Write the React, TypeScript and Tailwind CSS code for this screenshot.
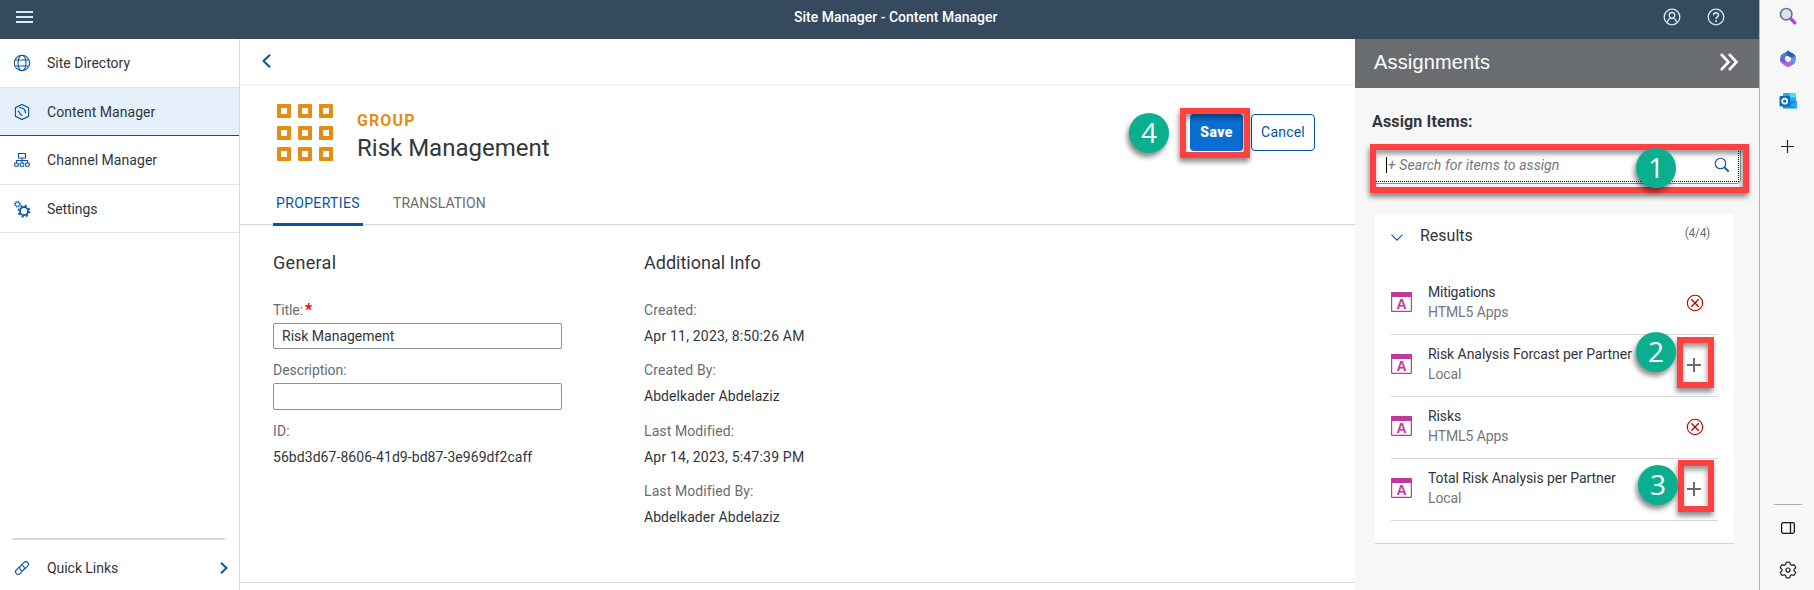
import React from "react";

type IconProps = { className?: string };

const GlobeIcon = ({ className }: IconProps) => (
  <svg viewBox="0 0 18 18" className={className} fill="none" stroke="currentColor" strokeWidth="1.1">
    <circle cx="9" cy="9" r="7.7" />
    <ellipse cx="9" cy="9" rx="4" ry="7.7" />
    <path d="M2.4 6h13.2M2.4 12h13.2" />
  </svg>
);

const ContentIcon = ({ className }: IconProps) => (
  <svg viewBox="0 0 18 18" className={className} fill="none" stroke="currentColor" strokeWidth="1.1">
    <path d="M9 1.4l6.600 3.300v8.600L9 16.600l-6.600-3.300V4.700z" />
    <path d="M6.500 4.700c3 .1 6 1.300 6 5.500M4.800 8.200c1.500.2 1.500.9 1.800 1.800.4 1.300 1.200 1.900 2.800 2.300" strokeWidth="1.200" />
  </svg>
);

const ChannelIcon = ({ className }: IconProps) => (
  <svg viewBox="0 0 18 18" className={className} fill="none" stroke="currentColor" strokeWidth="1.1">
    <path d="M5.500 2.500h7v4.500h-7zM9 7v5M3.500 12V9.500h11V12" />
    <rect x="1.700" y="12" width="3.600" height="3.200" rx="0.800" />
    <rect x="7.200" y="12" width="3.600" height="3.200" rx="0.800" />
    <rect x="12.700" y="12" width="3.600" height="3.200" rx="0.800" />
  </svg>
);

const GearsIcon = ({ className }: IconProps) => (
  <svg viewBox="0 0 18 18" className={className} fill="none" stroke="currentColor">
    <circle cx="11" cy="11.200" r="4" strokeWidth="1.800" />
    <circle cx="11" cy="11.200" r="5.600" strokeWidth="1.600" strokeDasharray="2.200 2.198" />
    <circle cx="4.400" cy="4.200" r="2.100" strokeWidth="1" />
    <circle cx="4.400" cy="4.200" r="3.100" strokeWidth="1" strokeDasharray="1.200 1.235" />
  </svg>
);

const LinkIcon = ({ className }: IconProps) => (
  <svg viewBox="0 0 18 18" className={className} fill="none" stroke="currentColor" strokeWidth="1.100" strokeLinecap="round">
    <g transform="rotate(-45 9 9)">
      <path d="M10 11.700h4.300a2.600 2.600 0 0 0 0-5.200H9.200a2.600 2.600 0 0 0-1.700 4.500" />
      <path d="M8 6.300H3.700a2.600 2.600 0 0 0 0 5.200h5.100A2.600 2.600 0 0 0 10.500 7" />
    </g>
  </svg>
);

const AppIcon = ({ className }: IconProps) => (
  <svg viewBox="0 0 21 20" className={className}>
    <rect x="0.600" y="0.600" width="19.800" height="18.800" rx="0.600" fill="#fff" stroke="#c0399f" strokeWidth="1.200" />
    <rect width="21" height="5" rx="0.800" fill="#c0399f" />
    <text x="10.500" y="17" textAnchor="middle" fontFamily="Liberation Sans, sans-serif" fontWeight="700" fontSize="14" fill="#c0399f">A</text>
  </svg>
);

const RemoveIcon = ({ className }: IconProps) => (
  <svg viewBox="0 0 18 18" className={className} fill="none" stroke="#bb0000" strokeWidth="1.1">
    <circle cx="9" cy="9" r="7.700" />
    <path d="M5.300 5.300l7.400 7.400M12.700 5.300l-7.400 7.400" strokeWidth="1.300" />
  </svg>
);

const AddIcon = ({ className }: IconProps) => (
  <svg viewBox="0 0 14 14" className={className} fill="none" stroke="#6a6d70" strokeWidth="2">
    <path d="M7 0v14M0 7h14" />
  </svg>
);

const SearchIcon = ({ className }: IconProps) => (
  <svg viewBox="0 0 16 16" className={className} fill="none" stroke="#0854a0">
    <circle cx="6.500" cy="6.500" r="5.300" strokeWidth="1.100" />
    <path d="M10.400 10.400l4.300 4.100" strokeWidth="1.900" />
  </svg>
);

const Badge = ({ n, pos }: { n: number; pos: string }) => (
  <div
    className={`absolute ${pos} flex size-10 items-center justify-center rounded-full bg-[#0aaf8f] pb-0.5 font-['Open_Sans',sans-serif] text-[28px] font-medium leading-none text-white shadow-[-2px_4px_5px_rgba(0,0,0,0.45)]`}
  >
    {n}
  </div>
);

const Frame = ({ pos }: { pos: string }) => (
  <div
    className={`absolute ${pos} border-[6px] border-[#ff4141] shadow-[-1px_4px_5px_rgba(0,0,0,0.45),inset_-1px_4px_5px_rgba(0,0,0,0.4)]`}
  />
);

const navItems = [
  { label: "Site Directory", Icon: GlobeIcon, cls: "h-[49px] border-[#e4e4e4]", text: "" },
  { label: "Content Manager", Icon: ContentIcon, cls: "h-12 bg-[#e5f0fa] border-[#0854a0]", text: "tracking-[0.03px]" },
  { label: "Channel Manager", Icon: ChannelIcon, cls: "h-[49px] border-[#e4e4e4]", text: "tracking-[0.05px]" },
  { label: "Settings", Icon: GearsIcon, cls: "h-12 border-[#e4e4e4]", text: "tracking-[-0.1px]" },
];

const results = [
  { title: "Mitigations", sub: "HTML5 Apps", assigned: true, text: "tracking-[-0.25px]" },
  { title: "Risk Analysis Forcast per Partner", sub: "Local", assigned: false, text: "tracking-[-0.05px]" },
  { title: "Risks", sub: "HTML5 Apps", assigned: true, text: "tracking-[-0.1px]" },
  { title: "Total Risk Analysis per Partner", sub: "Local", assigned: false, text: "tracking-[-0.07px]" },
];

const info = [
  { label: "Created:", value: "Apr 11, 2023, 8:50:26 AM", text: "tracking-[0.2px]" },
  { label: "Created By:", value: "Abdelkader Abdelaziz", text: "tracking-[0.06px]" },
  { label: "Last Modified:", value: "Apr 14, 2023, 5:47:39 PM", text: "tracking-[0.2px]" },
  { label: "Last Modified By:", value: "Abdelkader Abdelaziz", text: "tracking-[0.06px]" },
];

function ShellBar() {
  return (
    <header className="flex h-[39px] shrink-0 items-center bg-[#354a5f] pl-4 text-[#d1e8ff]">
      <svg viewBox="0 0 17 12" className="mb-[5px] h-3 w-[17px]" fill="currentColor">
        <path d="M0 0h17v2H0zM0 5h17v2H0zM0 10h17v2H0z" />
      </svg>
      <h1 className="mb-[5px] ml-[761px] w-[204px] whitespace-nowrap text-sm font-medium text-white">
        Site Manager - Content Manager
      </h1>
      <svg viewBox="0 0 18 18" className="mb-[5px] ml-[665px] size-[18px]" fill="none" stroke="currentColor" strokeWidth="1.300">
        <circle cx="9" cy="9" r="7.800" />
        <circle cx="9" cy="7.300" r="2.800" />
        <path d="M4.600 14.200c.4-2.600 2.200-4 4.400-4s4 1.400 4.400 4" />
      </svg>
      <svg viewBox="0 0 18 18" className="mb-[5px] ml-[26px] size-[18px]" fill="none" stroke="currentColor" strokeWidth="1.300">
        <circle cx="9" cy="9" r="7.800" />
        <path d="M6.600 7.200c0-3.200 4.900-3.100 4.900-.2 0 1.900-2.400 1.800-2.400 4" strokeWidth="1.500" />
        <path d="M9.100 12.200v1.700" strokeWidth="1.700" />
      </svg>
    </header>
  );
}

function Sidebar() {
  return (
    <nav className="flex w-60 shrink-0 flex-col border-r border-[#d9d9d9] bg-white text-sm text-[#32363a]">
      {navItems.map(({ label, Icon, cls, text }) => (
        <div key={label} className={`flex items-center border-b pl-[13px] ${cls}`}>
          <Icon className="size-[18px] text-[#0854a0]" />
          <span className={`ml-4 ${text}`}>{label}</span>
        </div>
      ))}
      <div className="mx-3 mt-auto h-0.5 w-[213px] bg-[#d9d9d9]" />
      <div className="flex h-[50px] items-center pl-[13px] pt-1.5">
        <LinkIcon className="size-[18px] text-[#0854a0]" />
        <span className="ml-4 tracking-[-0.05px]">Quick Links</span>
        <svg viewBox="0 0 8 12" className="ml-auto mr-[11px] h-3 w-2" fill="none" stroke="#0854a0" strokeWidth="1.900">
          <path d="M1 .7L6.500 6 1 11.300" />
        </svg>
      </div>
    </nav>
  );
}

function Details() {
  return (
    <main className="flex w-[1115px] shrink-0 flex-col bg-white text-[#32363a]">
      <div className="flex h-[47px] items-center border-b-2 border-[#f5f5f5] pb-0.5 pl-[22px]">
        <svg viewBox="0 0 9 14" className="h-[14px] w-[9px]" fill="none" stroke="#0854a0" strokeWidth="2">
          <path d="M8 .7L1.500 7 8 13.300" />
        </svg>
      </div>
      <div className="flex h-[103px] items-start pl-[37px] pt-[18px]">
        <div className="grid grid-cols-3 gap-x-[7px] gap-y-[7.500px]">
          {Array.from({ length: 9 }, (_, i) => (
            <div key={i} className="size-[14px] rounded-[1px] border-4 border-[#e48c14]" />
          ))}
        </div>
        <div className="ml-6 pt-[7px]">
          <div className="text-base font-bold leading-5 tracking-[1.100px] text-[#e78c14]">GROUP</div>
          <div className="mt-0.5 text-2xl leading-[30px]">Risk Management</div>
        </div>
        <div className="ml-auto mr-10 mt-[10px] flex gap-2">
          <button className="h-[37px] w-[53px] rounded bg-[#0a6ed1] pb-0.5 text-sm font-black tracking-[0.35px] text-white">Save</button>
          <button className="h-[37px] w-16 rounded border border-[#0854a0] pb-px text-sm tracking-[0.2px] text-[#0854a0]">Cancel</button>
        </div>
      </div>
      <div className="flex h-9 items-stretch border-b border-[#d9d9d9] pl-[33px] text-sm shadow-[0_1px_2px_rgba(0,0,0,0.06)]">
        <div className="flex h-[37px] w-[90px] justify-center rounded-t-[2px] border-b-[3px] border-[#0854a0] pt-1 tracking-[0.35px] text-[#0854a0]">PROPERTIES</div>
        <div className="ml-[30px] pt-1 tracking-[0.05px] text-[#6a6d70]">TRANSLATION</div>
      </div>
      <div className="flex flex-1 pl-[33px] pt-[26px]">
        <section className="w-[371px]">
          <h2 className="text-lg leading-6 tracking-[0.3px]">General</h2>
          <div className="mt-[25px] text-sm">
            <div className="h-[23px] leading-5 tracking-[-0.1px] text-[#6a6d70]">
              Title:<span className="ml-0.5 text-base font-bold leading-4 text-[#e00000]">*</span>
            </div>
            <div className="flex h-[26px] w-[289px] items-center rounded-[2px] border border-[#89919a] px-2">Risk Management</div>
            <div className="mt-[11px] h-[23px] leading-5 tracking-[-0.06px] text-[#6a6d70]">Description:</div>
            <div className="h-[27px] w-[289px] rounded-[2px] border border-[#89919a]" />
            <div className="mt-[11px] leading-5 tracking-[0.1px] text-[#6a6d70]">ID:</div>
            <div className="mt-1.5 leading-5 tracking-[0.06px]">56bd3d67-8606-41d9-bd87-3e969df2caff</div>
          </div>
        </section>
        <section>
          <h2 className="text-lg leading-6">Additional Info</h2>
          <dl className="mt-[25px] text-sm leading-5">
            {info.map(({ label, value, text }) => (
              <div key={label} className="h-[60.400px]">
                <dt className="tracking-[0.1px] text-[#6a6d70]">{label}</dt>
                <dd className={`mt-1.5 ${text}`}>{value}</dd>
              </div>
            ))}
          </dl>
        </section>
      </div>
      <div className="h-2 border-t border-[#d9d9d9]" />
    </main>
  );
}

function Assignments() {
  return (
    <aside className="flex w-[404px] shrink-0 flex-col bg-[#f7f7f7] text-[#32363a]">
      <div className="flex h-[49px] items-center bg-[#6a6d70] pb-1 pl-[19px] pr-5 text-white">
        <h2 className="font-['Liberation_Sans',Arial,sans-serif] text-xl tracking-[0.15px]">Assignments</h2>
        <svg viewBox="0 0 20 18" className="ml-auto h-[18px] w-5" fill="none" stroke="currentColor" strokeWidth="2.600">
          <path d="M2 1l7.500 8L2 17M10 1l7.500 8L10 17" />
        </svg>
      </div>
      <div className="mt-[22px] pl-[17px] text-base font-bold leading-6 tracking-[0.15px]">Assign Items:</div>
      <div className="ml-[18px] mt-[13px] flex h-[37px] w-[368px] rounded-sm border border-[#89919a] bg-white p-px">
        <div className="flex flex-1 items-center border border-dotted border-black pb-0.5 pl-[10px] pr-2">
          <span className="h-4 w-px bg-black" />
          <span className="ml-px text-sm italic tracking-[0.07px] text-[#74777a]">+ Search for items to assign</span>
          <SearchIcon className="ml-auto size-4" />
        </div>
      </div>
      <div className="ml-5 mt-[30px] h-[330px] w-[359px] border-b border-[#d3d3d3] bg-white pl-4">
        <div className="flex h-[59px] items-start pt-[10px]">
          <svg viewBox="0 0 12 7" className="mt-[10px] h-[7px] w-3" fill="none" stroke="#0854a0" strokeWidth="1.100">
            <path d="M.5 .7L6 6.200 11.500 .7" />
          </svg>
          <span className="ml-[17px] text-base leading-6">Results</span>
          <span className="ml-auto mr-6 text-xs leading-[18px] tracking-[-0.3px] text-[#6a6d70]">(4/4)</span>
        </div>
        <ul>
          {results.map(({ title, sub, assigned, text }, i) => (
            <li key={i} className="flex h-[62px] w-[327px] items-center border-b border-[#d9d9d9] text-sm leading-5">
              <AppIcon className="mb-1 h-5 w-[21px]" />
              <div className="mb-[3px] ml-4 flex-1 whitespace-nowrap">
                <div className={text}>{title}</div>
                <div className="tracking-[-0.100px] text-[#74777a]">{sub}</div>
              </div>
              {assigned ? <RemoveIcon className="mb-0.5 mr-[14px] size-[18px]" /> : <AddIcon className="mb-0.5 mr-[17px] size-[14px]" />}
            </li>
          ))}
        </ul>
      </div>
    </aside>
  );
}

function BrowserStrip() {
  return (
    <div className="flex w-[55px] shrink-0 flex-col items-center border-l border-[#b5b5b5] bg-[#f7f7f7] pl-0.5 pt-[7px]">
      <svg viewBox="0 0 18 18" className="size-[18px]" fill="none">
        <path d="M11.500 11.500l4.300 4.300" stroke="#b43bf0" strokeWidth="3.200" strokeLinecap="round" />
        <circle cx="7.200" cy="7.200" r="5.700" fill="#d4e6f0" stroke="#73767b" strokeWidth="1.700" />
      </svg>
      <svg viewBox="0 0 18 18" className="mt-[25px] size-[18px]">
        <path d="M9.500 0.500L3 4.200Q1.400 5.200 1.400 7v5l4.600-1.500V7L12 3.500z" fill="#4a7bd8" />
        <path d="M8.500 0.500l6.300 3.400q1.700 1 1.700 2.900V10L11.500 7.500 7.500 5z" fill="#3157b9" />
        <path d="M16.500 6v5q0 1.900-1.700 2.900L11 16l-1-4 2-1.700V7.500z" fill="#5f8ff0" />
        <path d="M1.400 10.500q0 2.300 1.800 3.300l4 2.600q1.800 1.100 3.600 0l4-2.500-3-2.600-2.800 .9-3-2.300z" fill="#a569d8" />
        <path d="M1.400 10.500V7.500L6 9.500v3z" fill="#7959c9" />
      </svg>
      <svg viewBox="0 0 18 18" className="mt-6 size-[18px]">
        <path d="M4 1h13v9H4z" fill="#28a8ea" />
        <path d="M10.500 1H17v4.500h-6.500z" fill="#50d9ff" />
        <path d="M4 5.500h6.500V10H4z" fill="#0364b8" />
        <path d="M4 9h14v7.500H4z" fill="#1490df" />
        <path d="M18 9l-7 4.500 7 3z" fill="#28a8ea" />
        <rect x="0.500" y="4" width="10.500" height="10.500" rx="1" fill="#0f6cbd" />
        <circle cx="5.700" cy="9.200" r="2.500" fill="none" stroke="#fff" strokeWidth="1.700" />
      </svg>
      <svg viewBox="0 0 13 13" className="mr-px mt-[30px] size-[13px]" stroke="#222" strokeWidth="1.200">
        <path d="M6.500 0v13M0 6.500h13" />
      </svg>
      <div className="mt-auto h-px w-7 bg-[#aaa]" />
      <svg viewBox="0 0 14 12" className="mt-[17px] h-3 w-[14px]" fill="none" stroke="#111" strokeWidth="1.200">
        <rect x="0.600" y="0.600" width="12.800" height="10.800" rx="1.800" />
        <path d="M9.500 .6v10.800" />
      </svg>
      <svg viewBox="0 0 24 24" className="mb-[11px] mt-[27px] size-[18px]" fill="none" stroke="#222" strokeWidth="1.600" strokeLinejoin="round">
        <circle cx="12" cy="12" r="2.700" />
        <path d="M9.600 1.700q2.400-.5 4.800 0l.7 3.100 1.800 1 3-.9q1.600 1.800 2.400 4.100L20 11.100v1.900l2.300 2.100q-.8 2.300-2.400 4.100l-3-.9-1.800 1-.7 3q-2.400.5-4.800 0l-.7-3-1.800-1-3 .9q-1.600-1.800-2.400-4.100L4 13v-1.900L1.700 9q.8-2.300 2.400-4.100l3 .9 1.800-1z" />
      </svg>
    </div>
  );
}

export default function App() {
  return (
    <div className="relative flex h-[590px] w-[1814px] overflow-hidden bg-white font-[Roboto,'Liberation_Sans',sans-serif]">
      <div className="flex w-[1759px] shrink-0 flex-col">
        <ShellBar />
        <div className="flex min-h-0 flex-1">
          <Sidebar />
          <Details />
          <Assignments />
        </div>
      </div>
      <BrowserStrip />

      <Frame pos="left-[1180px] top-[108px] h-[50px] w-[70px]" />
      <Frame pos="left-[1370px] top-[144px] h-[49px] w-[379px]" />
      <Frame pos="left-[1677px] top-[337px] h-[51px] w-[37px]" />
      <Frame pos="left-[1678px] top-[460px] h-[52px] w-9" />
      <Badge n={1} pos="left-[1636px] top-[148px]" />
      <Badge n={2} pos="left-[1636px] top-[332px]" />
      <Badge n={3} pos="left-[1638px] top-[465px]" />
      <Badge n={4} pos="left-[1129px] top-[113px]" />
    </div>
  );
}
